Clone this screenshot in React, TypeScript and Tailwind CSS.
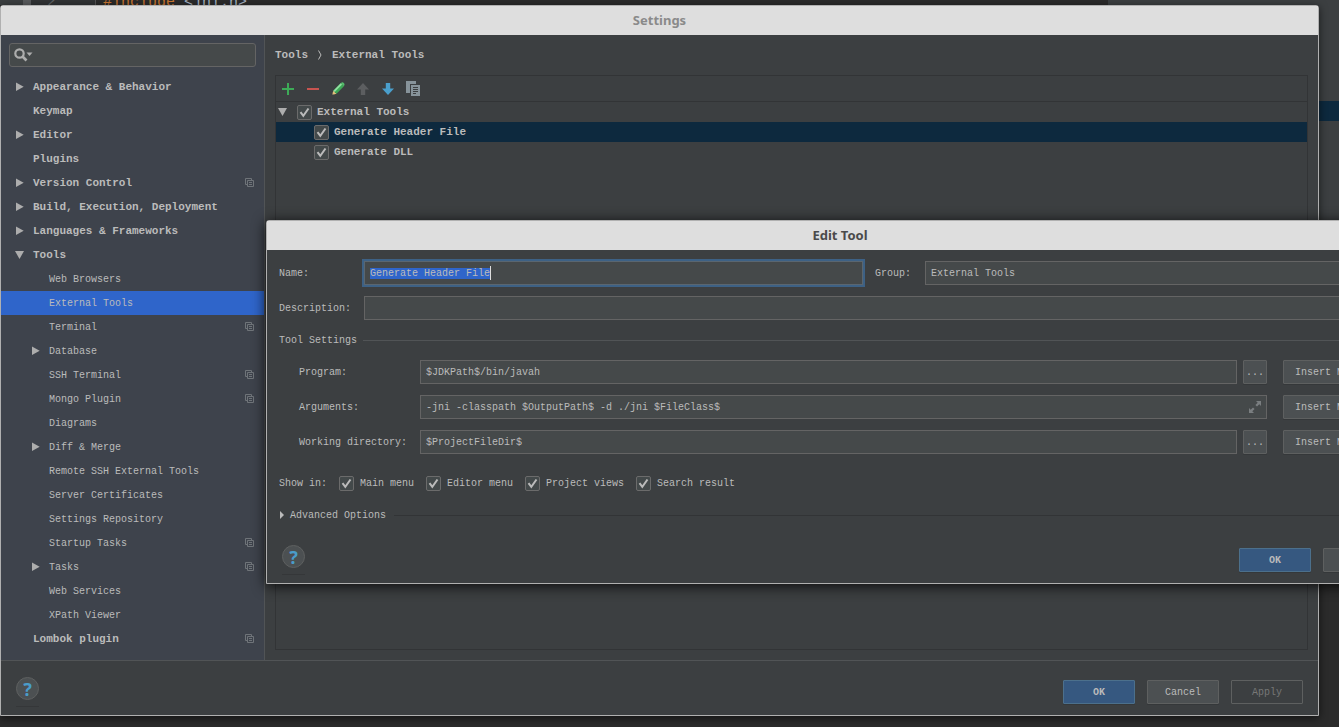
import { useEffect, useRef, type InputHTMLAttributes, type ReactNode } from "react";
import clsx from "clsx";

type TreeItem = {
  label: string;
  child?: boolean;
  arrow?: "open" | "closed";
  project?: boolean;
  selected?: boolean;
};

const TREE: TreeItem[] = [
  { label: "Appearance & Behavior", arrow: "closed" },
  { label: "Keymap" },
  { label: "Editor", arrow: "closed" },
  { label: "Plugins" },
  { label: "Version Control", arrow: "closed", project: true },
  { label: "Build, Execution, Deployment", arrow: "closed" },
  { label: "Languages & Frameworks", arrow: "closed" },
  { label: "Tools", arrow: "open" },
  { label: "Web Browsers", child: true },
  { label: "External Tools", child: true, selected: true },
  { label: "Terminal", child: true, project: true },
  { label: "Database", child: true, arrow: "closed" },
  { label: "SSH Terminal", child: true, project: true },
  { label: "Mongo Plugin", child: true, project: true },
  { label: "Diagrams", child: true },
  { label: "Diff & Merge", child: true, arrow: "closed" },
  { label: "Remote SSH External Tools", child: true },
  { label: "Server Certificates", child: true },
  { label: "Settings Repository", child: true },
  { label: "Startup Tasks", child: true, project: true },
  { label: "Tasks", child: true, arrow: "closed", project: true },
  { label: "Web Services", child: true },
  { label: "XPath Viewer", child: true },
  { label: "Lombok plugin", project: true },
];

function Arrow({ open }: { open?: boolean }) {
  return (
    <svg viewBox="0 0 12 12" className="size-3 fill-[#adadad]" aria-hidden>
      <path d={open ? "M1 2h9L5.5 10z" : "M2 1.5v8.5L9.7 5.7z"} />
    </svg>
  );
}

function ProjectIcon() {
  return (
    <svg viewBox="0 0 9 10" className="h-[10px] w-[9px] stroke-[#6f7479]" fill="none" aria-hidden>
      <path d="M2 6.5H.5v-6h6V2M2.5 2.5h6v6h-6zM4 4.5h3M4 6.5h3" />
    </svg>
  );
}

function TitleBar({ children }: { children: ReactNode }) {
  return (
    <h2 className="h-[29px] shrink-0 bg-[#dedede] text-center font-['Noto_Sans'] text-[13px] leading-[29px] font-bold text-[#4a4a4a]">
      {children}
    </h2>
  );
}

function Check({ label, bold }: { label: string; bold?: boolean }) {
  return (
    <label className={clsx("flex items-center", bold ? "gap-[5px] text-[11px] font-bold" : "gap-[6px]")}>
      <span className="relative flex">
        <input
          type="checkbox"
          defaultChecked
          className="peer size-[15px] appearance-none rounded-[2px] border border-[#6b6b6b] bg-[#43494a]"
        />
        <svg
          viewBox="0 0 15 15"
          className="pointer-events-none absolute inset-0 hidden size-[15px] peer-checked:block"
          fill="none"
          stroke="#bbbbbb"
          strokeWidth="2"
          aria-hidden
        >
          <path d="M3.5 7.2l2.8 3.6L11.5 3.5" />
        </svg>
      </span>
      {label}
    </label>
  );
}

function Button({ children, variant = "normal", className }: { children: ReactNode; variant?: "normal" | "primary" | "disabled"; className?: string }) {
  return (
    <button
      type="button"
      disabled={variant === "disabled"}
      className={clsx(
        "h-6 shrink-0 rounded-[1px] border text-center whitespace-nowrap",
        variant === "normal" && "border-[#5e6060] bg-[#4c5052] shadow-[0_1px_0_#35383a]",
        variant === "primary" && "border-[#4c708c] bg-[#365880] font-bold shadow-[0_1px_0_#35383a]",
        variant === "disabled" && "border-[#5e6060] text-[#777777]",
        className,
      )}
    >
      {children}
    </button>
  );
}

function HelpButton() {
  return (
    <button type="button" aria-label="Help" className="flex h-[30px] w-[23px] flex-col justify-between">
      <span className="flex size-[23px] items-center justify-center rounded-full border border-[#5e6060] bg-[#4c5052] font-['Noto_Sans'] text-lg leading-none font-bold text-[#4a9cc9]">
        ?
      </span>
      <span className="h-px w-full bg-[#353739]" />
    </button>
  );
}

function TextField({ className, ...rest }: InputHTMLAttributes<HTMLInputElement>) {
  return (
    <input
      type="text"
      className={clsx("h-6 min-w-0 border border-[#646464] bg-[#45494a] px-[5px] outline-none", className)}
      {...rest}
    />
  );
}

function NameField() {
  const ref = useRef<HTMLInputElement>(null);
  useEffect(() => {
    ref.current?.focus();
    ref.current?.select();
  }, []);
  return (
    <span className="relative flex w-[499px]">
      <input
        id="name"
        ref={ref}
        type="text"
        defaultValue="Generate Header File"
        className="h-6 w-full border border-[#5a6670] bg-[#45494a] px-[5px] ring-2 ring-[#3d6185] outline-none selection:bg-[#2f65ca] selection:text-[#bbbbbb]"
      />
      <span className="absolute top-[5px] left-[126px] h-[14px] w-px bg-[#dddddd]" aria-hidden />
    </span>
  );
}

function SettingRow({ id, label, value, expand }: { id: string; label: string; value: string; expand?: boolean }) {
  return (
    <div className="flex items-center pl-5">
      <label htmlFor={id} className="w-[121px] shrink-0">
        {label}
      </label>
      {expand ? (
        <span className="relative flex flex-1">
          <TextField id={id} defaultValue={value} className="w-full" />
          <svg viewBox="0 0 12 12" className="absolute top-[6px] right-[6px] size-3 fill-[#7a7e80]" aria-hidden>
            <path d="M7 0h5v5l-1.7-1.7L8 5.6 6.4 4l2.3-2.3zM5 12H0V7l1.7 1.7L4 6.4 5.6 8l-2.3 2.3z" />
          </svg>
        </span>
      ) : (
        <>
          <TextField id={id} defaultValue={value} className="flex-1" />
          <Button className="ml-[6px] w-6">...</Button>
        </>
      )}
      <Button className="ml-4 w-[118px] pl-[11px] text-left">Insert Macro...</Button>
    </div>
  );
}

function Toolbar() {
  const btn = "flex w-6 items-center justify-center";
  return (
    <div className="flex h-[26px] gap-px border-b border-[#323436]">
      <button type="button" aria-label="Add" className={btn}>
        <svg viewBox="0 0 14 14" className="size-[14px]" stroke="#3dab57" strokeWidth="2">
          <path d="M7 1v12M1 7h12" />
        </svg>
      </button>
      <button type="button" aria-label="Remove" className={btn}>
        <svg viewBox="0 0 14 14" className="size-[14px]" stroke="#c75450" strokeWidth="2">
          <path d="M1 7h12" />
        </svg>
      </button>
      <button type="button" aria-label="Edit" className={btn}>
        <svg viewBox="0 0 14 14" className="size-[14px]">
          <path d="M1 13l1.3-4.3 3.2 3z" fill="#e3c07a" />
          <path d="M1 13l.5-1.7 1.2 1.2z" fill="#555" />
          <path d="M2.3 8.7L9.7 1.3l3.2 3-7.4 7.4z" fill="#3da856" />
          <path d="M2.3 8.7L9.7 1.3l1.4 1.3-7.4 7.4z" fill="#8fe0a0" />
          <path d="M9.7 1.3l1-.9c1.3-.5 2.8.8 2.8 2.4l-.6 1.5z" fill="#56bd6c" />
        </svg>
      </button>
      <button type="button" aria-label="Move up" disabled className={btn}>
        <svg viewBox="0 0 14 14" className="size-[14px]" fill="#5c5e60">
          <path d="M7 1l6 6.5H9.2V13H4.8V7.5H1z" />
        </svg>
      </button>
      <button type="button" aria-label="Move down" className={btn}>
        <svg viewBox="0 0 14 14" className="size-[14px]" fill="#4a9fcc">
          <path d="M7 13l6-6.5H9.2V1H4.8v5.5H1z" />
        </svg>
      </button>
      <button type="button" aria-label="Copy" className={btn}>
        <svg viewBox="0 0 14 15" className="h-[15px] w-[14px]">
          <path d="M0 0h10v3H4v9H0z" fill="#87939a" />
          <path d="M5 4h9v11H5z" fill="#87939a" />
          <path d="M7 6.5h5M7 8.5h5M7 10.5h5M7 12.5h3" stroke="#3c3f41" />
        </svg>
      </button>
    </div>
  );
}

function Sidebar() {
  return (
    <nav className="w-[264px] shrink-0 border-r border-[#515456] bg-[#3e434c] pt-2">
      <div className="relative mx-2 mb-2">
        <input
          type="search"
          aria-label="Search settings"
          className="block h-6 w-full rounded-[3px] border border-[#646464] bg-[#45494a] pl-7 outline-none"
        />
        <svg viewBox="0 0 19 14" className="absolute top-[5px] left-[5px] h-[14px] w-[19px]" aria-hidden>
          <circle cx="5.5" cy="5.5" r="4.2" fill="none" stroke="#adadad" strokeWidth="2.2" />
          <path d="M8.5 8.5l4 4" stroke="#adadad" strokeWidth="2.6" />
          <path d="M12.5 4.5h6l-3 3.5z" fill="#adadad" />
        </svg>
      </div>
      <ul>
        {TREE.map((item) => (
          <li key={item.label}>
            <button
              type="button"
              className={clsx(
                "flex h-6 w-full items-center pr-[10px] text-left",
                item.child ? "pl-[29px]" : "pl-[13px] text-[11px] font-bold",
                item.selected && "bg-[#2f65ca]",
              )}
            >
              <span className="mr-[7px] w-3">{item.arrow && <Arrow open={item.arrow === "open"} />}</span>
              <span className="flex-1">{item.label}</span>
              {item.project && <ProjectIcon />}
            </button>
          </li>
        ))}
      </ul>
    </nav>
  );
}

function SettingsWindow() {
  return (
    <section className="absolute top-[5px] right-5 bottom-[11px] left-0 flex flex-col rounded-t-[3px] border border-[#b0b0b0] bg-[#3c3f41] shadow-[0_2px_8px_rgba(0,0,0,0.6)]">
      <TitleBar>
        <span className="text-[#8a8a8a]">Settings</span>
      </TitleBar>
      <div className="flex min-h-0 flex-1">
        <Sidebar />
        <main className="flex flex-1 flex-col px-[10px] pb-[10px]">
          <div className="flex h-10 items-center text-[11px] font-bold">
            <span>Tools</span>
            <svg viewBox="0 0 4 10" className="mx-[10px] h-[10px] w-1" fill="none" stroke="#bbbbbb" aria-hidden>
              <path d="M.5.5l2.5 4.5L.5 9.5" />
            </svg>
            <span>External Tools</span>
          </div>
          <div className="flex-1 border border-[#323436]">
            <Toolbar />
            <div className="flex h-5 items-center gap-2 pl-[1px]">
              <Arrow open />
              <Check label="External Tools" bold />
            </div>
            <div className="flex h-5 items-center bg-[#0d293e] pl-[38px]">
              <Check label="Generate Header File" bold />
            </div>
            <div className="flex h-5 items-center pl-[38px]">
              <Check label="Generate DLL" bold />
            </div>
          </div>
        </main>
      </div>
      <footer className="flex h-[55px] shrink-0 items-center justify-between border-t border-[#515456] pt-2 pr-[15px] pl-[15px]">
        <HelpButton />
        <div className="flex gap-3">
          <Button variant="primary" className="w-[72px]">OK</Button>
          <Button className="w-[72px]">Cancel</Button>
          <Button variant="disabled" className="w-[72px]">Apply</Button>
        </div>
      </footer>
    </section>
  );
}

function EditToolDialog() {
  return (
    <section className="absolute top-[220px] left-[266px] w-[1148px] rounded-t-[3px] border border-[#b0b0b0] bg-[#3c3f41] shadow-[0_2px_14px_rgba(0,0,0,0.85)]">
      <TitleBar>Edit Tool</TitleBar>
      <form className="px-3 pb-[7px]">
        <div className="flex flex-col gap-[11px] pt-[11px]">
          <div className="flex items-center">
            <label htmlFor="name" className="w-[85px]">Name:</label>
            <NameField />
            <label htmlFor="group" className="ml-3 w-[50px]">Group:</label>
            <TextField id="group" defaultValue="External Tools" className="flex-1" />
          </div>
          <div className="flex items-center">
            <label htmlFor="description" className="w-[85px]">Description:</label>
            <TextField id="description" className="flex-1" />
          </div>
          <div className="flex h-[18px] items-center gap-[6px]">
            <h3>Tool Settings</h3>
            <span className="h-px flex-1 bg-[#515456]" />
          </div>
          <SettingRow id="program" label="Program:" value="$JDKPath$/bin/javah" />
          <SettingRow id="arguments" label="Arguments:" value="-jni -classpath $OutputPath$ -d ./jni $FileClass$" expand />
          <SettingRow id="directory" label="Working directory:" value="$ProjectFileDir$" />
        </div>
        <div className="mt-4 flex h-[26px] items-center gap-3">
          <span>Show in:</span>
          <Check label="Main menu" />
          <Check label="Editor menu" />
          <Check label="Project views" />
          <Check label="Search result" />
        </div>
        <div className="mt-2 flex h-[22px] items-center">
          <button type="button" className="flex items-center gap-[5px]">
            <svg viewBox="0 0 6 8" className="h-2 w-[6px] fill-[#bbbbbb]" aria-hidden>
              <path d="M1 0v8l4-4z" />
            </svg>
            Advanced Options
          </button>
          <span className="ml-2 h-px flex-1 bg-[#323436]" />
        </div>
        <div className="mt-[18px] flex h-8 items-center justify-between pr-[6px] pl-[3px]">
          <HelpButton />
          <div className="flex gap-3">
            <Button variant="primary" className="w-[72px]">OK</Button>
            <Button className="w-[72px]">Cancel</Button>
          </div>
        </div>
      </form>
    </section>
  );
}

export default function App() {
  return (
    <div className="relative h-screen overflow-hidden bg-[#2b2b2b] font-['Liberation_Mono',monospace] text-[10px] text-[#bbbbbb]">
      <div className="flex items-start">
        <div className="h-[5px] w-[23px] bg-[#3c3f41]" />
        <div className="h-[5px] w-2 bg-[#595b5d]" />
        <div className="w-[65px] border-r border-[#555555] bg-[#313335] pl-4 text-[15px] leading-[6px] text-[#606366]">2</div>
        <div className="flex-1 pl-[7px] text-[15px] leading-[6px] whitespace-pre">
          <span className="text-[#cc7832]">#include</span> <span className="text-[#a9b7c6]">&lt;jni.h&gt;</span>
        </div>
        <div className="h-[560px] w-[231px] bg-[#3c3f41] pt-[101px]">
          <div className="h-5 bg-[#0d293e]" />
        </div>
      </div>
      <SettingsWindow />
      <EditToolDialog />
    </div>
  );
}
